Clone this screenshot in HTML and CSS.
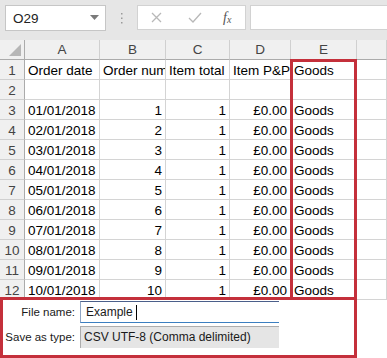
FILE: index.html
```html
<!DOCTYPE html>
<html lang="en">
<head>
  <meta charset="UTF-8">
  <title>Save as CSV</title>
  <link rel="stylesheet" href="styles.css">
</head>
<body>
  <div class="toolbar">
    <div class="namebox">
      <span>O29</span>
      <svg class="namebox-arrow" width="9" height="5" viewBox="0 0 9 5"><path d="M0 0h9L4.5 5z" fill="#7a7a7a"/></svg>
    </div>
    <div class="grip">
      <svg width="3" height="11" viewBox="0 0 3 11"><rect x="1" y="0" width="1.5" height="1.5" fill="#9a9a9a"/><rect x="1" y="4.5" width="1.5" height="1.5" fill="#9a9a9a"/><rect x="1" y="9" width="1.5" height="1.5" fill="#9a9a9a"/></svg>
    </div>
    <div class="fx-buttons">
      <svg class="fx-cancel" width="11" height="11" viewBox="0 0 11 11"><path d="M1 1l9 9M10 1l-9 9" stroke="#b8b8b8" stroke-width="1.3"/></svg>
      <svg class="fx-enter" width="14" height="11" viewBox="0 0 14 11"><path d="M1 6l4 4L13 1" stroke="#b8b8b8" stroke-width="1.3" fill="none"/></svg>
      <span class="fx-label">f<sub>x</sub></span>
    </div>
    <div class="formula-input"></div>
  </div>

  <div class="sheet">
    <div class="grid" id="grid">
      <div class="corner">
        <svg width="12" height="12" viewBox="0 0 12 12"><path d="M12 0v12H0z" fill="#b6b6b6"/></svg>
      </div>
      <div class="col-head">A</div>
      <div class="col-head">B</div>
      <div class="col-head">C</div>
      <div class="col-head">D</div>
      <div class="col-head">E</div>
      <div class="col-head"></div>
    </div>
    <div class="highlight-col"></div>
  </div>

  <div class="save-panel">
    <div class="save-row">
      <label class="save-label" for="file-name">File name:</label>
      <div class="file-input" id="file-name">Example<span class="caret"></span></div>
    </div>
    <div class="save-row">
      <span class="save-label">Save as type:</span>
      <div class="type-select">CSV UTF-8 (Comma delimited)</div>
    </div>
  </div>

  <script>
    const rows = [['Order date', 'Order number', 'Item total', 'Item P&P', 'Goods'], []];
    for (let i = 1; i <= 10; i++) {
      const day = String(i).padStart(2, '0');
      rows.push([day + '/01/2018', i, 1, '£0.00', 'Goods']);
    }

    const grid = document.getElementById('grid');
    rows.forEach((row, r) => {
      const head = document.createElement('div');
      head.className = 'row-head';
      head.textContent = r + 1;
      grid.appendChild(head);
      for (let c = 0; c < 6; c++) {
        const cell = document.createElement('div');
        cell.className = 'cell';
        const value = row[c];
        if (value !== undefined) {
          if (typeof value === 'number' || (r > 0 && c === 3)) cell.classList.add('num');
          cell.textContent = value;
        }
        grid.appendChild(cell);
      }
    });
  </script>
</body>
</html>
```

FILE: styles.css
```css
body {
  margin: 0;
  width: 387px;
  height: 358px;
  overflow: hidden;
  background: #ffffff;
  font-family: "Liberation Sans", Arial, sans-serif;
}

.toolbar {
  height: 40px;
  box-sizing: border-box;
  padding: 5px 0 0 5px;
  background: #e6e6e6;
  display: flex;
  align-items: flex-start;
}

.namebox {
  width: 101px;
  height: 26px;
  box-sizing: border-box;
  background: #ffffff;
  border: 1px solid #c6c6c6;
  display: flex;
  align-items: center;
  justify-content: space-between;
  padding: 0 6px 0 7px;
  font-size: 13.5px;
  color: #222;
}

.namebox-arrow {
  margin-top: -2px;
}

.grip {
  width: 31px;
  height: 26px;
  display: flex;
  align-items: center;
  justify-content: center;
}

.fx-buttons {
  width: 109px;
  height: 25px;
  box-sizing: border-box;
  background: #ffffff;
  border: 1px solid #d2d2d2;
  display: flex;
  align-items: center;
  padding-left: 13px;
}

.fx-cancel {
  margin-right: 26px;
}

.fx-enter {
  margin-right: 21px;
}

.fx-label {
  font-family: "Liberation Serif", serif;
  font-style: italic;
  font-size: 14px;
  color: #555;
}

.fx-label sub {
  font-size: 10px;
  vertical-align: -1px;
}

.formula-input {
  flex: 1;
  height: 25px;
  margin-left: 4px;
  background: #ffffff;
  border: 1px solid #d2d2d2;
  border-right: none;
  box-sizing: border-box;
}

.sheet {
  position: relative;
}

.grid {
  display: grid;
  grid-template-columns: 25px 75px 66px 64px 61px 66px 1fr;
  grid-auto-rows: 20px;
  font-size: 13.5px;
}

.corner,
.col-head,
.row-head {
  background: #f0f0f0;
  color: #444;
  box-sizing: border-box;
}

.corner {
  border-right: 1px solid #ababab;
  border-bottom: 1px solid #ababab;
  display: flex;
  align-items: flex-end;
  justify-content: flex-end;
  padding: 0 3px 3px 0;
}

.col-head {
  border-right: 1px solid #d0d0d0;
  border-bottom: 1px solid #ababab;
  text-align: center;
  line-height: 19px;
}

.row-head {
  border-right: 1px solid #ababab;
  border-bottom: 1px solid #d0d0d0;
  text-align: center;
  line-height: 21px;
}

.cell {
  box-sizing: border-box;
  border-right: 1px solid #d4d4d4;
  border-bottom: 1px solid #d4d4d4;
  padding: 0 3px;
  line-height: 21px;
  white-space: nowrap;
  overflow: hidden;
  color: #000;
}

.cell.num {
  text-align: right;
}

.highlight-col {
  position: absolute;
  left: 290px;
  top: 19px;
  width: 67px;
  height: 241px;
  box-sizing: border-box;
  border: 3px solid #c4303b;
}

.save-panel {
  position: relative;
  width: 357px;
  height: 61px;
  margin-top: -3px;
  box-sizing: border-box;
  border: 3px solid #c4303b;
  background: #ffffff;
  padding-top: 1px;
  display: flex;
  flex-direction: column;
  gap: 3px;
  font-size: 11.5px;
  color: #1a1a1a;
}

.save-row {
  display: flex;
  align-items: center;
}

.save-label {
  width: 72px;
  text-align: right;
  margin-right: 5px;
}

.file-input {
  width: 199px;
  height: 22px;
  box-sizing: border-box;
  border-top: 1px solid #4b5f8a;
  border-left: 1px solid #8ea4c4;
  border-bottom: 1px solid #3c7fc0;
  padding-left: 5px;
  display: flex;
  align-items: center;
  font-size: 12px;
}

.caret {
  display: inline-block;
  width: 1px;
  height: 15px;
  margin-left: 3px;
  background: #000;
}

.type-select {
  width: 199px;
  height: 22px;
  box-sizing: border-box;
  background: #e5e5e5;
  border-top: 1px solid #adadad;
  border-left: 1px solid #adadad;
  padding-left: 3px;
  line-height: 21px;
  font-size: 12px;
}
```
